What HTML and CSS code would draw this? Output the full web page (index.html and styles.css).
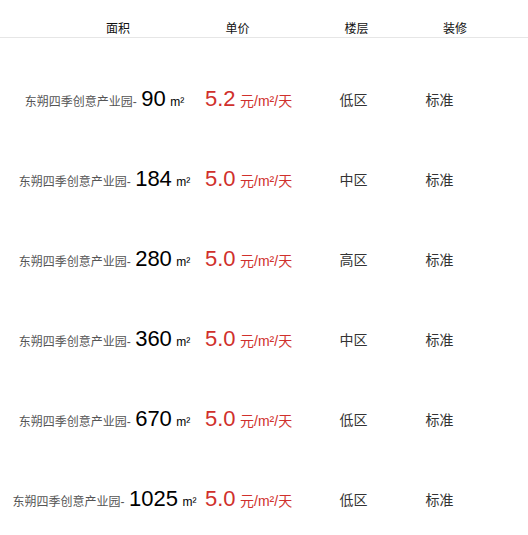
FILE: index.html
```html
<!DOCTYPE html>
<html lang="zh">
<head>
<meta charset="utf-8">
<title>房源列表</title>
<link rel="stylesheet" href="styles.css">
</head>
<body>
<div class="table">
  <div class="head">
    <div class="h h-area">面积</div>
    <div class="h h-price">单价</div>
    <div class="h h-floor">楼层</div>
    <div class="h h-deco">装修</div>
  </div>
  <div class="rows">
    <div class="row">
      <div class="c-area"><span class="name">东朔四季创意产业园-</span> <span class="num">90</span> <span class="unit">m²</span></div>
      <div class="c-price"><span class="pnum">5.2</span> <span class="punit">元/m²/天</span></div>
      <div class="c-floor">低区</div>
      <div class="c-deco">标准</div>
    </div>
    <div class="row">
      <div class="c-area"><span class="name">东朔四季创意产业园-</span> <span class="num">184</span> <span class="unit">m²</span></div>
      <div class="c-price"><span class="pnum">5.0</span> <span class="punit">元/m²/天</span></div>
      <div class="c-floor">中区</div>
      <div class="c-deco">标准</div>
    </div>
    <div class="row">
      <div class="c-area"><span class="name">东朔四季创意产业园-</span> <span class="num">280</span> <span class="unit">m²</span></div>
      <div class="c-price"><span class="pnum">5.0</span> <span class="punit">元/m²/天</span></div>
      <div class="c-floor">高区</div>
      <div class="c-deco">标准</div>
    </div>
    <div class="row">
      <div class="c-area"><span class="name">东朔四季创意产业园-</span> <span class="num">360</span> <span class="unit">m²</span></div>
      <div class="c-price"><span class="pnum">5.0</span> <span class="punit">元/m²/天</span></div>
      <div class="c-floor">中区</div>
      <div class="c-deco">标准</div>
    </div>
    <div class="row">
      <div class="c-area"><span class="name">东朔四季创意产业园-</span> <span class="num">670</span> <span class="unit">m²</span></div>
      <div class="c-price"><span class="pnum">5.0</span> <span class="punit">元/m²/天</span></div>
      <div class="c-floor">低区</div>
      <div class="c-deco">标准</div>
    </div>
    <div class="row">
      <div class="c-area"><span class="name">东朔四季创意产业园-</span> <span class="num">1025</span> <span class="unit">m²</span></div>
      <div class="c-price"><span class="pnum">5.0</span> <span class="punit">元/m²/天</span></div>
      <div class="c-floor">低区</div>
      <div class="c-deco">标准</div>
    </div>
  </div>
</div>
</body>
</html>
```

FILE: styles.css
```css
html, body {
  margin: 0;
  padding: 0;
  background: #fff;
}
body {
  font-family: "Liberation Sans", Arial, "Noto Sans CJK SC", sans-serif;
  color: #333;
}
.head {
  display: flex;
  height: 37px;
  border-bottom: 1px solid #e6e6e6;
  padding-left: 59px;
  box-sizing: content-box;
}
.h {
  font-size: 12px;
  line-height: 16px;
  padding-top: 21px;
  color: #111;
  text-align: center;
}
.h-area { width: 118px; }
.h-price { width: 121px; }
.h-floor { width: 117px; }
.h-deco { width: 80px; }

.rows {
  padding-top: 21px;
}
.row {
  display: flex;
  align-items: center;
  height: 80px;
}
.c-area {
  width: 193px;
  padding-left: 8px;
  text-align: center;
  white-space: nowrap;
}
.name {
  font-size: 12px;
  color: #555;
}
.num {
  font-size: 22px;
  color: #000;
}
.unit {
  font-size: 12px;
  color: #000;
}
.c-price {
  width: 100px;
  padding-left: 4px;
  white-space: nowrap;
  color: #d0302c;
}
.pnum {
  font-size: 22px;
}
.punit {
  font-size: 14px;
}
.c-floor {
  width: 97px;
  text-align: center;
  font-size: 14px;
}
.c-deco {
  width: 75px;
  text-align: center;
  font-size: 14px;
}
```
